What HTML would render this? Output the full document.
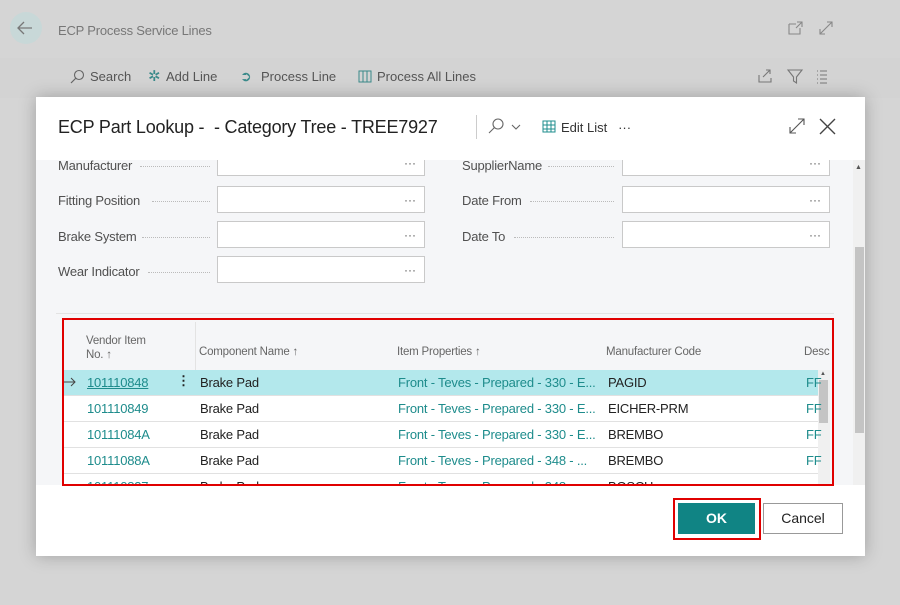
<!DOCTYPE html>
<html><head><style>
*{margin:0;padding:0;box-sizing:border-box}
body{width:900px;height:605px;background:#d5d5d5;font-family:"Liberation Sans",sans-serif;position:relative;overflow:hidden;color:#333}
.a{position:absolute;white-space:nowrap}
.t{font-size:13px;color:#505050}
.lbl{font-size:13px;color:#505050;letter-spacing:-0.2px}
.dots{position:absolute;border-bottom:1px dotted #bbb;height:1px}
.inp{position:absolute;background:#fff;border:1px solid #c9c9c9;width:208px;height:27px}
.inp:after{content:"···";position:absolute;right:8px;top:6px;font-size:12px;color:#555}
.cell{position:absolute;font-size:13px;white-space:nowrap;letter-spacing:-0.2px}
.teal{color:#1e8c8c}
.dk{color:#222}
.rowline{position:absolute;left:64px;width:754px;height:1px;background:#e1e1e1}
svg{position:absolute}
</style></head><body>
<div class="a" style="left:10px;top:12px;width:32px;height:32px;border-radius:50%;background:#c8d8d8"></div>
<svg style="left:16px;top:19px" width="18" height="18" viewBox="0 0 18 18"><path d="M16 9H2M8 3L2 9l6 6" stroke="#777" fill="none" stroke-width="1.3"/></svg>
<div class="a t" style="left:58px;top:23px;color:#777;letter-spacing:-0.2px">ECP Process Service Lines</div>
<svg style="left:788px;top:20px" width="16" height="16" viewBox="0 0 16 16"><path d="M1 4h7M1 4v10h11V8M9 2h5v5M14 2l-6 6" stroke="#888" fill="none" stroke-width="1.1"/></svg>
<svg style="left:818px;top:20px" width="16" height="16" viewBox="0 0 16 16"><path d="M2 14L14 2M9 2h5v5M2 9v5h5" stroke="#888" fill="none" stroke-width="1.1"/></svg>
<div class="a" style="left:0;top:58px;width:900px;height:40px;background:#d3d3d3"></div>
<svg style="left:69px;top:69px" width="16" height="16" viewBox="0 0 16 16"><circle cx="10" cy="6" r="4.5" stroke="#666" fill="none" stroke-width="1.1"/><path d="M7 9l-5 5" stroke="#666" stroke-width="1.2"/></svg>
<div class="a t" style="left:90px;top:69px;color:#555">Search</div>
<div class="a t" style="left:148px;top:67px;color:#3a8a8a;font-size:15px">✲</div>
<div class="a t" style="left:166px;top:69px;color:#555">Add Line</div>
<div class="a t" style="left:240px;top:68px;color:#3a8a8a;font-size:14px">➲</div>
<div class="a t" style="left:261px;top:69px;color:#555">Process Line</div>
<svg style="left:358px;top:70px" width="14" height="13" viewBox="0 0 14 13"><rect x="1" y="1" width="12" height="11" stroke="#3a8a8a" fill="none"/><path d="M5 1v11M9 1v11" stroke="#3a8a8a"/></svg>
<div class="a t" style="left:377px;top:69px;color:#555">Process All Lines</div>
<svg style="left:757px;top:67px" width="70" height="18" viewBox="0 0 70 18"><path d="M2 8v7h12V11M6 10l7-7M9 3h4v4" stroke="#777" fill="none" stroke-width="1.1"/><path d="M31 3h14l-5.5 7v6l-3-2v-4z" stroke="#777" fill="none" stroke-width="1.1"/><path d="M63 4h7M63 8h7M63 12h7M63 16h7M60 4h1M60 8h1M60 12h1M60 16h1" stroke="#777" stroke-width="1.1"/></svg>

<div class="a" style="left:36px;top:97px;width:829px;height:459px;background:#fff;box-shadow:0 0 16px rgba(0,0,0,.25)"></div>
<div class="a" style="left:58px;top:117px;font-size:18px;color:#222;letter-spacing:-0.2px">ECP Part Lookup -&nbsp; - Category Tree - TREE7927</div>
<div class="a" style="left:476px;top:115px;width:1px;height:24px;background:#ccc"></div>
<svg style="left:488px;top:118px" width="36" height="18" viewBox="0 0 36 18"><circle cx="10" cy="6" r="5" stroke="#666" fill="none" stroke-width="1.1"/><path d="M6.5 9.5L1 15M24 7l4 4 4-4" stroke="#666" fill="none" stroke-width="1.1"/></svg>
<svg style="left:542px;top:120px" width="15" height="14" viewBox="0 0 15 14"><rect x="1" y="1" width="12" height="11" stroke="#1e8c8c" fill="none"/><path d="M1 5h12M1 9h12M5 1v11M9 1v11" stroke="#1e8c8c"/></svg>
<div class="a" style="left:561px;top:120px;font-size:13px;color:#333">Edit List &nbsp; ···</div>
<svg style="left:789px;top:118px" width="16" height="16" viewBox="0 0 16 16"><path d="M1 15L15 1M9 1h6v6M1 9v6h6" stroke="#555" fill="none" stroke-width="1.1"/></svg>
<svg style="left:819px;top:118px" width="17" height="17" viewBox="0 0 17 17"><path d="M1 1l15 15M16 1L1 16" stroke="#444" stroke-width="1.4"/></svg>

<div class="a" style="left:36px;top:160px;width:817px;height:325px;background:#f5f6f8"></div>
<div class="a" style="left:853px;top:160px;width:12px;height:325px;background:#f0f0f0"></div>
<div class="a" style="left:855px;top:247px;width:9px;height:186px;background:#c4c4c4"></div>
<div class="a" style="left:855px;top:164px;font-size:7px;color:#555">▲</div>

<div class="a lbl" style="left:58px;top:158px">Manufacturer</div><div class="dots" style="left:140px;top:166px;width:70px"></div>
<div class="inp" style="left:217px;top:150px;height:26px;border-top:none"></div>
<div class="a lbl" style="left:58px;top:193px">Fitting Position</div><div class="dots" style="left:152px;top:201px;width:58px"></div>
<div class="inp" style="left:217px;top:186px"></div>
<div class="a lbl" style="left:58px;top:229px">Brake System</div><div class="dots" style="left:142px;top:237px;width:68px"></div>
<div class="inp" style="left:217px;top:221px"></div>
<div class="a lbl" style="left:58px;top:264px">Wear Indicator</div><div class="dots" style="left:148px;top:272px;width:62px"></div>
<div class="inp" style="left:217px;top:256px"></div>
<div class="a lbl" style="left:462px;top:158px">SupplierName</div><div class="dots" style="left:548px;top:166px;width:66px"></div>
<div class="inp" style="left:622px;top:150px;height:26px;border-top:none"></div>
<div class="a lbl" style="left:462px;top:193px">Date From</div><div class="dots" style="left:530px;top:201px;width:84px"></div>
<div class="inp" style="left:622px;top:186px"></div>
<div class="a lbl" style="left:462px;top:229px">Date To</div><div class="dots" style="left:514px;top:237px;width:100px"></div>
<div class="inp" style="left:622px;top:221px"></div>
<div class="a" style="left:36px;top:150px;width:817px;height:10px;background:#fff"></div>

<div class="a" style="left:56px;top:313px;width:778px;height:1px;background:#e3e3e3"></div>
<div class="a" style="left:64px;top:370px;width:754px;height:115px;background:#fff"></div>
<div class="a" style="left:64px;top:370px;width:754px;height:25px;background:#b3e8ec"></div>
<div class="rowline" style="top:395px"></div><div class="rowline" style="top:421px"></div><div class="rowline" style="top:447px"></div><div class="rowline" style="top:473px"></div>
<div class="a" style="left:818px;top:370px;width:12px;height:115px;background:#f0f0f0"></div>
<div class="a" style="left:819px;top:380px;width:9px;height:43px;background:#c4c4c4"></div>
<div class="a" style="left:820px;top:371px;font-size:6px;color:#555">▲</div>
<div class="a" style="left:195px;top:322px;width:1px;height:48px;background:#e3e3e3"></div>
<div class="cell" style="left:86px;top:334px;font-size:11.5px;color:#666;line-height:14px">Vendor Item<br>No. ↑</div>
<div class="cell" style="left:199px;top:346px;font-size:11.5px;color:#666">Component Name ↑</div>
<div class="cell" style="left:397px;top:346px;font-size:11.5px;color:#666">Item Properties ↑</div>
<div class="cell" style="left:606px;top:346px;font-size:11.5px;color:#666">Manufacturer Code</div>
<div class="cell" style="left:804px;top:346px;font-size:11.5px;color:#666">Desc</div>

<svg style="left:63px;top:377px" width="14" height="10" viewBox="0 0 14 10"><path d="M0 5h12M8 1l4 4-4 4" stroke="#444" fill="none"/></svg>
<div class="cell teal" style="left:87px;top:375px;text-decoration:underline">101110848</div>
<div class="cell dk" style="left:177px;top:373px;font-weight:bold">⋮</div>
<div class="cell dk" style="left:200px;top:375px">Brake Pad</div>
<div class="cell teal" style="left:398px;top:375px">Front - Teves - Prepared - 330 - E...</div>
<div class="cell dk" style="left:608px;top:375px">PAGID</div>
<div class="cell teal" style="left:806px;top:375px">FF</div>
<div class="cell teal" style="left:87px;top:401px">101110849</div><div class="cell dk" style="left:200px;top:401px">Brake Pad</div><div class="cell teal" style="left:398px;top:401px">Front - Teves - Prepared - 330 - E...</div><div class="cell dk" style="left:608px;top:401px">EICHER-PRM</div><div class="cell teal" style="left:806px;top:401px">FF</div>
<div class="cell teal" style="left:87px;top:427px">10111084A</div><div class="cell dk" style="left:200px;top:427px">Brake Pad</div><div class="cell teal" style="left:398px;top:427px">Front - Teves - Prepared - 330 - E...</div><div class="cell dk" style="left:608px;top:427px">BREMBO</div><div class="cell teal" style="left:806px;top:427px">FF</div>
<div class="cell teal" style="left:87px;top:453px">10111088A</div><div class="cell dk" style="left:200px;top:453px">Brake Pad</div><div class="cell teal" style="left:398px;top:453px">Front - Teves - Prepared - 348 - ...</div><div class="cell dk" style="left:608px;top:453px">BREMBO</div><div class="cell teal" style="left:806px;top:453px">FF</div>
<div class="a" style="left:64px;top:473px;width:754px;height:12px;overflow:hidden"><div class="cell teal" style="left:23px;top:6px">101110837</div><div class="cell dk" style="left:136px;top:6px">Brake Pad</div><div class="cell teal" style="left:334px;top:6px">Front - Teves - Prepared - 348 - ...</div><div class="cell dk" style="left:544px;top:6px">BOSCH</div></div>
<div class="a" style="left:62px;top:318px;width:772px;height:168px;border:2px solid #e00000"></div>

<div class="a" style="left:673px;top:498px;width:88px;height:42px;border:2px solid #e00000"></div>
<div class="a" style="left:678px;top:503px;width:77px;height:31px;background:#108484;color:#fff;font-size:14px;font-weight:bold;text-align:center;line-height:31px">OK</div>
<div class="a" style="left:763px;top:503px;width:80px;height:31px;background:#fff;border:1px solid #999;color:#222;font-size:14px;text-align:center;line-height:29px">Cancel</div>
</body></html>
